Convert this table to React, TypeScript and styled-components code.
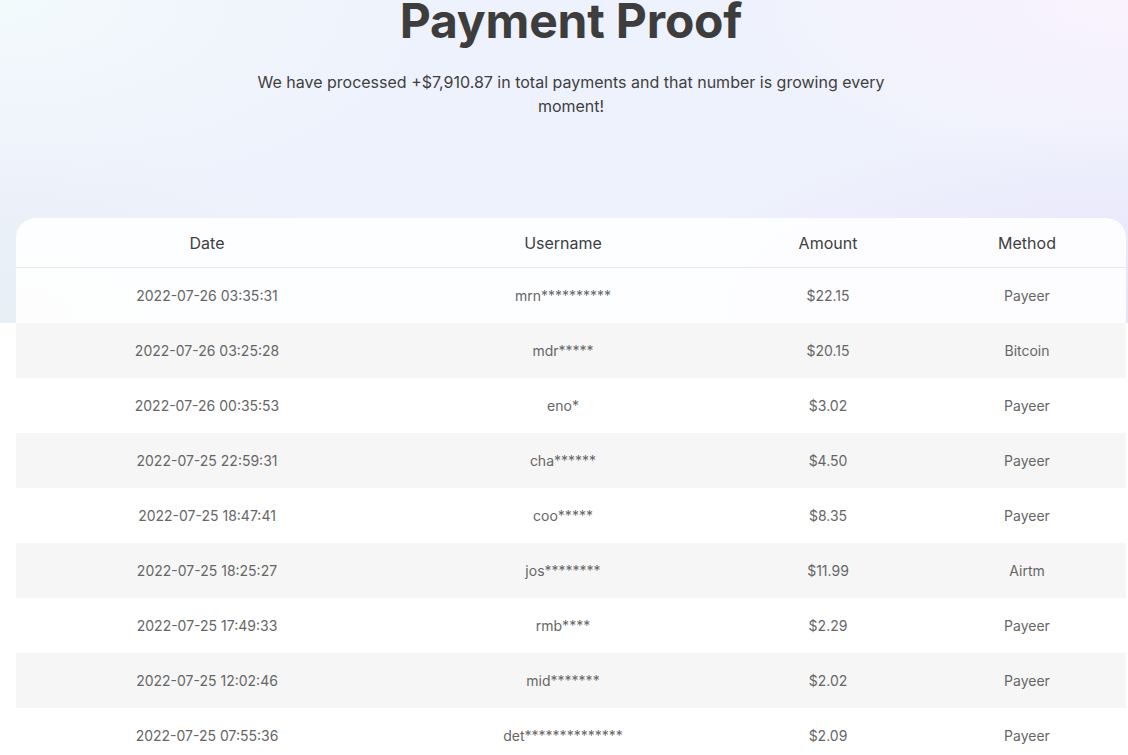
import React from "react";
import styled, { createGlobalStyle } from "styled-components";

const GlobalStyle = createGlobalStyle`
  html, body { margin: 0; padding: 0; background: #ffffff; }
  body { font-family: Inter, "Noto Sans", "Liberation Sans", sans-serif; overflow: hidden; }
  * { box-sizing: border-box; }
`;

const Page = styled.div`
  width: 1128px;
  min-height: 755px;
  background-color: #ffffff;
  background-image:
    radial-gradient(ellipse 60% 90% at 100% 100%, rgba(231, 224, 252, 0.9), rgba(231, 224, 252, 0) 70%),
    radial-gradient(ellipse 50% 80% at 100% 0%, rgba(250, 243, 254, 1), rgba(250, 243, 254, 0) 70%),
    radial-gradient(ellipse 55% 90% at 0% 0%, rgba(243, 250, 252, 1), rgba(243, 250, 252, 0) 70%),
    radial-gradient(ellipse 50% 90% at 0% 100%, rgba(232, 239, 245, 1), rgba(232, 239, 245, 0) 70%),
    linear-gradient(#eef2fc, #eef2fc);
  background-repeat: no-repeat;
  background-size: 100% 323px;
  padding: 0 2px 0 16px;
`;

const Hero = styled.header`
  display: flex;
  flex-direction: column;
  align-items: center;
  text-align: center;
  padding-bottom: 100px;
`;

const Title = styled.h1`
  margin: -8px 0 0;
  font-size: 48px;
  line-height: 1.2;
  font-weight: 700;
  color: #3d3d3d;
  letter-spacing: -0.2px;
`;

const Subtitle = styled.p`
  margin: 20px 0 0;
  max-width: 640px;
  font-size: 16px;
  line-height: 24px;
  color: #3f3f3f;
`;

const Card = styled.section`
  width: 1110px;
  background: rgba(255, 255, 255, 0.88);
  border-radius: 20px 20px 0 0;
  overflow: hidden;
`;

const cols = "382px 330px 200px 198px";

const HeadRow = styled.div`
  display: grid;
  grid-template-columns: ${cols};
  height: 50px;
  border-bottom: 1px solid #e6e8ea;
  align-items: center;
`;

const HeadCell = styled.div`
  text-align: center;
  font-size: 16px;
  color: #404040;
  padding-top: 1px;
`;

const Row = styled.div<{ $striped: boolean }>`
  display: grid;
  grid-template-columns: ${cols};
  height: 55px;
  align-items: center;
  background: ${(p) => (p.$striped ? "#f6f6f6" : "transparent")};
`;

const Cell = styled.div`
  text-align: center;
  font-size: 14px;
  color: #666666;
`;

const rows: [string, string, string, string][] = [
  ["2022-07-26 03:35:31", "mrn**********", "$22.15", "Payeer"],
  ["2022-07-26 03:25:28", "mdr*****", "$20.15", "Bitcoin"],
  ["2022-07-26 00:35:53", "eno*", "$3.02", "Payeer"],
  ["2022-07-25 22:59:31", "cha******", "$4.50", "Payeer"],
  ["2022-07-25 18:47:41", "coo*****", "$8.35", "Payeer"],
  ["2022-07-25 18:25:27", "jos********", "$11.99", "Airtm"],
  ["2022-07-25 17:49:33", "rmb****", "$2.29", "Payeer"],
  ["2022-07-25 12:02:46", "mid*******", "$2.02", "Payeer"],
  ["2022-07-25 07:55:36", "det**************", "$2.09", "Payeer"],
];

export default function App() {
  return (
    <>
      <GlobalStyle />
      <Page>
        <Hero>
          <Title>Payment Proof</Title>
          <Subtitle>
            We have processed +$7,910.87 in total payments and that number is growing every moment!
          </Subtitle>
        </Hero>
        <Card>
          <HeadRow>
            <HeadCell>Date</HeadCell>
            <HeadCell>Username</HeadCell>
            <HeadCell>Amount</HeadCell>
            <HeadCell>Method</HeadCell>
          </HeadRow>
          {rows.map((r, i) => (
            <Row key={i} $striped={i % 2 === 1}>
              {r.map((c, j) => (
                <Cell key={j}>{c}</Cell>
              ))}
            </Row>
          ))}
        </Card>
      </Page>
    </>
  );
}
